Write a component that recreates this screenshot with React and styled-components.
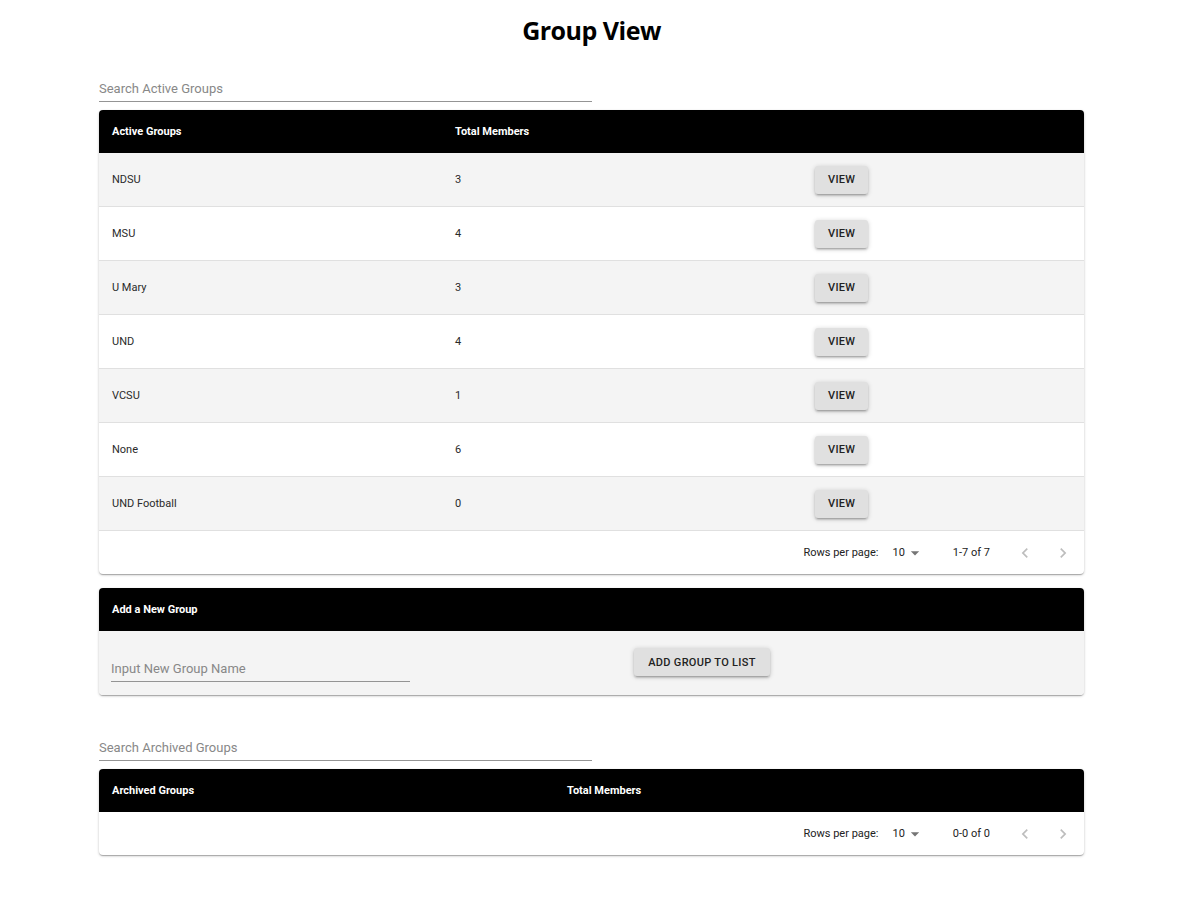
import React from 'react';
import styled, { createGlobalStyle } from 'styled-components';

const GlobalStyle = createGlobalStyle`
  body {
    margin: 0;
    background: #fff;
    font-family: Roboto, "Liberation Sans", sans-serif;
    color: #222;
  }
`;

const activeGroups = [
  { name: 'NDSU', members: 3 },
  { name: 'MSU', members: 4 },
  { name: 'U Mary', members: 3 },
  { name: 'UND', members: 4 },
  { name: 'VCSU', members: 1 },
  { name: 'None', members: 6 },
  { name: 'UND Football', members: 0 },
];

function ChevronLeft() {
  return (
    <svg width="20" height="20" viewBox="0 0 24 24">
      <path d="M15.41 7.41 14 6l-6 6 6 6 1.41-1.41L10.83 12z" fill="currentColor" />
    </svg>
  );
}

function ChevronRight() {
  return (
    <svg width="20" height="20" viewBox="0 0 24 24">
      <path d="M10 6 8.59 7.41 13.17 12l-4.58 4.59L10 18l6-6z" fill="currentColor" />
    </svg>
  );
}

function DropArrow() {
  return (
    <svg width="20" height="20" viewBox="0 0 24 24">
      <path d="M7 10l5 5 5-5z" fill="currentColor" />
    </svg>
  );
}

function Pagination({ range }) {
  return (
    <PagerRow>
      <PagerLabel>Rows per page:</PagerLabel>
      <PerPage>
        10
        <DropArrow />
      </PerPage>
      <PagerRange>{range}</PagerRange>
      <PagerButton>
        <ChevronLeft />
      </PagerButton>
      <PagerButton>
        <ChevronRight />
      </PagerButton>
    </PagerRow>
  );
}

export default function App() {
  return (
    <>
      <GlobalStyle />
      <Page>
        <Title>Group View</Title>

        <SearchInput placeholder="Search Active Groups" />
        <Card>
          <HeaderRow columns="343px 343px 1fr">
            <HeaderCell>Active Groups</HeaderCell>
            <HeaderCell>Total Members</HeaderCell>
            <HeaderCell />
          </HeaderRow>
          {activeGroups.map((g, i) => (
            <BodyRow key={g.name} striped={i % 2 === 0}>
              <BodyCell>{g.name}</BodyCell>
              <BodyCell>{g.members}</BodyCell>
              <ActionCell>
                <GreyButton>View</GreyButton>
              </ActionCell>
            </BodyRow>
          ))}
          <Pagination range="1-7 of 7" />
        </Card>

        <AddCard>
          <HeaderRow columns="1fr">
            <HeaderCell>Add a New Group</HeaderCell>
          </HeaderRow>
          <AddBody>
            <NewGroupInput placeholder="Input New Group Name" />
            <AddButton>Add Group to List</AddButton>
          </AddBody>
        </AddCard>

        <ArchivedSearch placeholder="Search Archived Groups" />
        <Card>
          <HeaderRow columns="455px 1fr">
            <HeaderCell>Archived Groups</HeaderCell>
            <HeaderCell>Total Members</HeaderCell>
          </HeaderRow>
          <Pagination range="0-0 of 0" />
        </Card>
      </Page>
    </>
  );
}

// CSS styles:

const Page = styled.div`
  width: 985px;
  margin-left: 99px;
  padding-bottom: 40px;
  display: flex;
  flex-direction: column;
`;

const Title = styled.h1`
  margin: 0;
  padding-top: 14px;
  height: 32px;
  line-height: 32px;
  text-align: center;
  font-family: "Open Sans", "DejaVu Sans", sans-serif;
  font-weight: 700;
  font-size: 25px;
  letter-spacing: -0.5px;
  color: #000;
`;

const SearchInput = styled.input`
  margin-top: 30px;
  width: 493px;
  height: 25px;
  box-sizing: content-box;
  padding: 0;
  border: none;
  border-bottom: 1px solid #949494;
  background: transparent;
  font-family: Roboto, sans-serif;
  font-size: 13px;
  color: #222;
  outline: none;

  &::placeholder {
    color: #888;
  }
`;

const ArchivedSearch = styled(SearchInput)`
  margin-top: 40px;
`;

const Card = styled.div`
  margin-top: 8px;
  background: #fff;
  border-radius: 4px;
  overflow: hidden;
  box-shadow: 0 1px 3px rgba(0, 0, 0, 0.2), 0 1px 1px rgba(0, 0, 0, 0.14),
    0 2px 1px -1px rgba(0, 0, 0, 0.12);
`;

const AddCard = styled(Card)`
  margin-top: 14px;
`;

const HeaderRow = styled.div`
  display: grid;
  grid-template-columns: ${(p) => p.columns};
  height: 43px;
  align-items: center;
  background: #000;
`;

const HeaderCell = styled.div`
  padding-left: 13px;
  color: #fff;
  font-size: 11px;
  font-weight: 700;
`;

const BodyRow = styled.div`
  display: grid;
  grid-template-columns: 343px 343px 1fr;
  height: 53px;
  align-items: center;
  background: ${(p) => (p.striped ? '#f4f4f4' : '#fff')};
  border-bottom: 1px solid #e0e0e0;
`;

const BodyCell = styled.div`
  padding-left: 13px;
  font-size: 11px;
  color: #2a2a2a;
`;

const ActionCell = styled.div`
  padding-left: 30px;
  display: flex;
  align-items: center;
`;

const GreyButton = styled.button`
  height: 28px;
  padding: 0 13px;
  border: none;
  border-radius: 3px;
  background: #e0e0e0;
  box-shadow: 0 1px 5px rgba(0, 0, 0, 0.2), 0 2px 2px rgba(0, 0, 0, 0.14),
    0 3px 1px -2px rgba(0, 0, 0, 0.12);
  font-family: Roboto, sans-serif;
  font-size: 11px;
  font-weight: 500;
  letter-spacing: 0.3px;
  text-transform: uppercase;
  color: #222;
`;

const AddBody = styled.div`
  height: 64px;
  display: flex;
  align-items: flex-start;
  padding-left: 12px;
  background: #f4f4f4;
`;

const NewGroupInput = styled(SearchInput)`
  margin-top: 25px;
  width: 299px;
`;

const AddButton = styled(GreyButton)`
  margin-top: 17px;
  margin-left: 224px;
  width: 136px;
  padding: 0;
`;

const PagerRow = styled.div`
  height: 43px;
  display: flex;
  align-items: center;
  justify-content: flex-end;
  padding-right: 2px;
  font-size: 11px;
  color: #222;
`;

const PagerLabel = styled.span`
  margin-right: 14px;
`;

const PerPage = styled.span`
  display: flex;
  align-items: center;
  color: #222;

  svg {
    color: #757575;
  }
`;

const PagerRange = styled.span`
  margin-left: 28px;
  margin-right: 16px;
`;

const PagerButton = styled.span`
  width: 38px;
  display: flex;
  justify-content: center;
  color: rgba(0, 0, 0, 0.26);
`;
